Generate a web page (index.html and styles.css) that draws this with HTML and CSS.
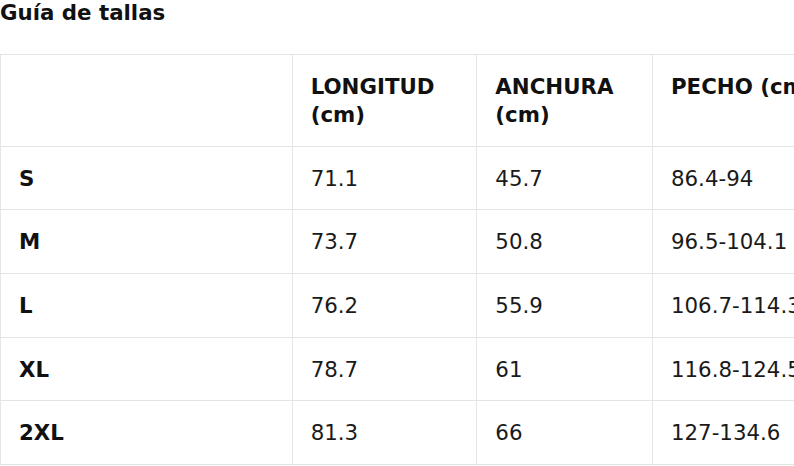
FILE: index.html
```html
<!DOCTYPE html>
<html lang="es">
<head>
<meta charset="utf-8">
<title>Guía de tallas</title>
<link rel="stylesheet" href="styles.css">
</head>
<body>
<h2 class="title">Guía de tallas</h2>
<table class="sizes">
  <thead>
    <tr>
      <th class="col-size"></th>
      <th class="col-len">LONGITUD (cm)</th>
      <th class="col-wid">ANCHURA (cm)</th>
      <th class="col-chest">PECHO (cm)</th>
    </tr>
  </thead>
  <tbody>
    <tr><th>S</th><td>71.1</td><td>45.7</td><td>86.4-94</td></tr>
    <tr><th>M</th><td>73.7</td><td>50.8</td><td>96.5-104.1</td></tr>
    <tr><th>L</th><td>76.2</td><td>55.9</td><td>106.7-114.3</td></tr>
    <tr><th>XL</th><td>78.7</td><td>61</td><td>116.8-124.5</td></tr>
    <tr><th>2XL</th><td>81.3</td><td>66</td><td>127-134.6</td></tr>
  </tbody>
</table>
</body>
</html>
```
FILE: styles.css
```css
html, body {
  margin: 0;
  padding: 0;
  overflow: hidden;
  background: #fff;
}
body {
  font-family: "DejaVu Sans", sans-serif;
  font-size: 21.33px;
  color: #111;
}
.title {
  margin: 0 0 29px 0;
  font-size: 21.33px;
  font-weight: bold;
  line-height: 25px;
}
.sizes {
  border-collapse: collapse;
  table-layout: fixed;
  width: 900px;
}
.sizes th,
.sizes td {
  border: 1.33px solid #e4e4e4;
  padding: 18px 16.67px 16.67px 18px;
  line-height: 28px;
  text-align: left;
  vertical-align: top;
}
.sizes th {
  font-weight: bold;
}
.sizes td {
  font-weight: normal;
  color: #1a1a1a;
}
.col-size { width: 256px; }
.col-len { width: 149px; }
.col-wid { width: 140px; }
.col-chest { width: 218px; }
```
